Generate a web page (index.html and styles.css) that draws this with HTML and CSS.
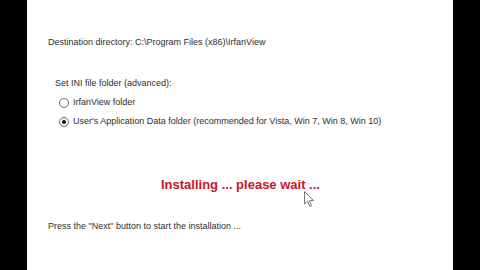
FILE: index.html
```html
<!DOCTYPE html>
<html>
<head>
<meta charset="utf-8">
<link rel="stylesheet" href="styles.css">
</head>
<body>
<div class="panel">
  <div class="dest">Destination directory: C:\Program Files (x86)\IrfanView</div>
  <div class="ini">
    <div class="ini-title">Set INI file folder (advanced):</div>
    <div class="radio-row"><span class="radio"></span><span>IrfanView folder</span></div>
    <div class="radio-row"><span class="radio checked"></span><span>User's Application Data folder (recommended for Vista, Win 7, Win 8, Win 10)</span></div>
  </div>
  <div class="status">
    <span class="installing">Installing ... please wait ...</span>
    <svg class="cursor" width="11" height="17" viewBox="0 0 11 17"><path d="M0.5 0.5 L0.5 13 L3.5 10.2 L5.8 15.5 L7.6 14.7 L5.4 9.6 L9.5 9.6 Z" fill="#fff" stroke="#777" stroke-width="1" stroke-linejoin="round"/></svg>
  </div>
  <div class="press">Press the "Next" button to start the installation ...</div>
</div>
</body>
</html>
```
FILE: styles.css
```css
html, body {
  margin: 0;
  padding: 0;
  background: #000;
  width: 480px;
  height: 270px;
  overflow: hidden;
}
.panel {
  margin-left: 27px;
  width: 426px;
  height: 270px;
  background: #fff;
  box-sizing: border-box;
  padding: 37px 0 0 21px;
  font-family: "Liberation Sans", Arial, sans-serif;
  font-size: 9px;
  line-height: 11px;
  color: #2e2e2e;
}
.ini {
  margin-top: 30px;
  padding-left: 7px;
}
.ini-title {
  margin-bottom: 4px;
}
.radio-row {
  display: flex;
  align-items: center;
  gap: 4px;
  padding-left: 4px;
  height: 19px;
}
.radio {
  width: 8px;
  height: 8px;
  border: 1px solid #666;
  border-radius: 50%;
  box-sizing: content-box;
  position: relative;
  background: #fff;
}
.radio.checked::after {
  content: "";
  position: absolute;
  left: 2px;
  top: 2px;
  width: 4px;
  height: 4px;
  border-radius: 50%;
  background: #111;
}
.status {
  margin-top: 46px;
  padding-left: 113px;
  position: relative;
  height: 40px;
}
.installing {
  font-size: 13px;
  font-weight: bold;
  color: #cc1229;
  line-height: 15px;
}
.cursor {
  position: absolute;
  left: 256px;
  top: 14px;
}
.press {
  margin-top: 4px;
}
```
